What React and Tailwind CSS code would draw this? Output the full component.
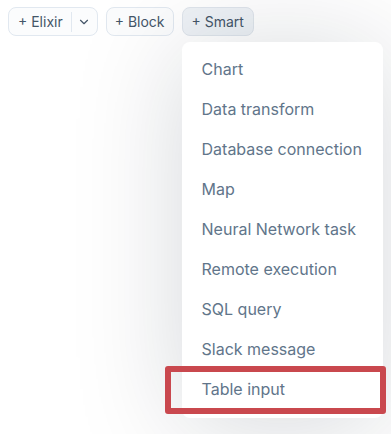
import { ChevronDown } from 'lucide-react'

const items = [
  'Chart',
  'Data transform',
  'Database connection',
  'Map',
  'Neural Network task',
  'Remote execution',
  'SQL query',
  'Slack message',
  'Table input',
]

export default function App() {
  return (
    <div className="h-[434px] w-[391px] overflow-hidden bg-white font-['Inter',sans-serif]">
      <div className="flex items-center gap-2 px-2 pt-[7px]">
        <div className="flex h-[29px] items-center rounded-lg border border-[#e1e8f0] bg-[#fbfcfd] text-sm text-[#445668]">
          <span className="pl-[9px] pr-2">+ Elixir</span>
          <span className="h-5 w-px bg-[#e1e8f0]" />
          <span className="flex w-[25px] justify-center">
            <ChevronDown size={14} strokeWidth={2} />
          </span>
        </div>
        <div className="flex h-[29px] items-center rounded-lg border border-[#e1e8f0] bg-[#fbfcfd] px-2 text-sm text-[#445668]">
          + Block
        </div>
        <div className="relative">
          <div className="flex h-[29px] items-center rounded-lg border border-[#dfe5ec] bg-[#eef2f6] px-[9px] text-sm text-[#445668]">
            + Smart
          </div>
          <div className="absolute left-0 top-[35px] w-[201px] rounded-lg bg-white pb-[9px] pt-[7px] shadow-[0_8px_110px_rgba(13,24,41,0.17)]">
            {items.map((item) => (
              <div key={item} className="relative flex h-10 items-center px-5 text-base text-[#61758a]">
                {item}
                {item === 'Table input' && (
                  <div className="absolute -bottom-[5px] -left-[17px] -right-[3px] -top-[3px] rounded-[3px] border-[6px] border-[#c9484e]" />
                )}
              </div>
            ))}
          </div>
        </div>
      </div>
    </div>
  )
}
